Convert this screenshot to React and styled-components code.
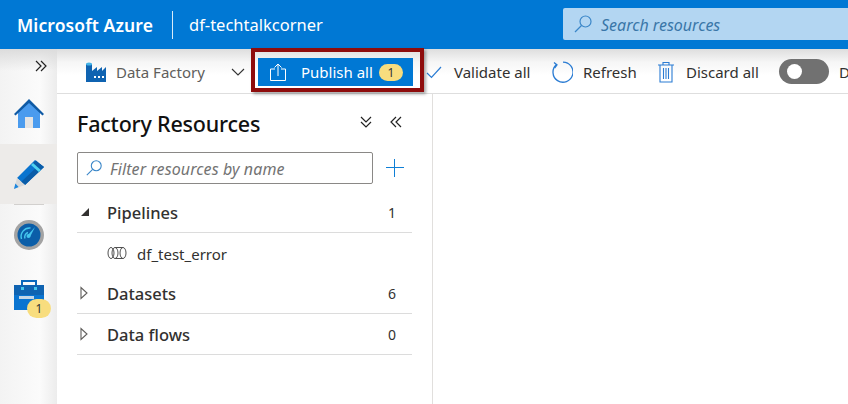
import React from 'react';
import styled, { createGlobalStyle } from 'styled-components';

const GlobalStyle = createGlobalStyle`
  html, body {
    margin: 0;
    padding: 0;
    background: white;
    overflow: hidden;
  }
  body {
    font-family: "Noto Sans", "Open Sans", "Liberation Sans", sans-serif;
  }
`;

const Page = styled.div`
  width: 848px;
  height: 404px;
  display: flex;
  flex-direction: column;
  overflow: hidden;
`;

const Header = styled.header`
  height: 49px;
  flex: none;
  background-color: #0078d4;
  display: flex;
  align-items: center;
  color: white;
  padding-left: 17px;
`;

const Brand = styled.span`
  font-size: 17.5px;
  font-weight: 600;
  letter-spacing: 0.1px;
  width: 155px;
  flex: none;
`;

const HeaderDivider = styled.span`
  width: 1px;
  height: 28px;
  background-color: #d8ebf9;
  flex: none;
`;

const FactoryName = styled.span`
  font-size: 16.5px;
  margin-left: 16px;
  width: 374px;
  flex: none;
`;

const SearchBox = styled.div`
  flex: 1;
  height: 32px;
  margin-top: -1px;
  background-color: #b3d6f2;
  border-radius: 2px 0 0 2px;
  display: flex;
  align-items: center;
  padding-left: 10px;
  gap: 8px;
  font-size: 16px;
  font-style: italic;
  color: #3a76a8;
`;

const Placeholder = styled.span`
  padding-top: 2px;
`;

const Body = styled.div`
  flex: 1;
  display: flex;
  min-height: 0;
`;

const Rail = styled.nav`
  width: 57px;
  flex: none;
  background:
    linear-gradient(to bottom, #dcdcdc, rgba(240, 240, 240, 0) 22px),
    linear-gradient(to right, #f3f3f3, #fbfbfb 70%, #ececec);
  display: flex;
  flex-direction: column;
  align-items: center;
  padding-top: 5px;
`;

const RailToggle = styled.div`
  align-self: flex-end;
  height: 24px;
  margin-bottom: 6px;
  padding-right: 9px;
  display: flex;
  align-items: center;
`;

const RailItem = styled.div`
  width: 57px;
  height: 60px;
  display: flex;
  align-items: center;
  justify-content: center;
  position: relative;
  background-color: ${props => props.active ? '#edebe9' : 'transparent'};
`;

const RailSeparator = styled.div`
  width: 30px;
  height: 1px;
  flex: none;
  background-color: #d2d0ce;
`;

const RailBadge = styled.span`
  position: absolute;
  left: 27px;
  top: 34px;
  width: 24px;
  height: 19px;
  border-radius: 10px;
  background-color: #f8dd7e;
  color: #333;
  font-size: 12px;
  display: flex;
  align-items: center;
  justify-content: center;
`;

const Main = styled.div`
  flex: 1;
  display: flex;
  flex-direction: column;
  min-width: 0;
`;

const Toolbar = styled.div`
  height: 44px;
  flex: none;
  background: linear-gradient(to bottom, #dedede, #f6f6f6 30%, #ffffff 60%);
  border-bottom: 1px solid #dedede;
  display: flex;
  align-items: center;
  padding-left: 29px;
  font-size: 15px;
  white-space: nowrap;
`;

const ToolbarAction = styled.div`
  display: flex;
  align-items: center;
  flex: none;
  width: ${props => props.width}px;
  gap: ${props => props.gap}px;
  margin-top: 2px;
  color: ${props => props.muted ? '#605e5c' : '#323130'};
`;

const FactoryLabel = styled.span`
  width: 106px;
`;

const Highlight = styled.div`
  flex: none;
  width: 173px;
  height: 44px;
  box-sizing: border-box;
  border: 4px solid #8e0c0c;
  box-shadow: 2px 2px 3px rgba(0, 0, 0, 0.35);
  padding: 6px 7px 0 3px;
  margin-right: 2px;
  align-self: flex-start;
  margin-top: -1px;
  position: relative;
`;

const PublishButton = styled.div`
  height: 28px;
  background-color: #0078d4;
  color: white;
  display: flex;
  align-items: center;
  padding-left: 11px;
`;

const PublishLabel = styled.span`
  margin-left: 14px;
`;

const CountBadge = styled.span`
  margin-left: 6px;
  width: 24px;
  height: 17px;
  border-radius: 9px;
  background-color: #f8dd7e;
  color: #333;
  font-size: 12px;
  display: flex;
  align-items: center;
  justify-content: center;
`;

const Switch = styled.div`
  width: 50px;
  height: 25px;
  border-radius: 13px;
  background-color: #717171;
  margin-right: 10px;
  flex: none;
  display: flex;
  align-items: center;
  padding-left: 8px;
  box-sizing: border-box;
`;

const SwitchKnob = styled.span`
  width: 15px;
  height: 15px;
  border-radius: 50%;
  background-color: white;
`;

const Content = styled.div`
  flex: 1;
  display: flex;
  min-height: 0;
`;

const ResourcePanel = styled.aside`
  width: 376px;
  flex: none;
  box-sizing: border-box;
  border-right: 1px solid #e1dfdd;
  padding: 0 20px;
`;

const PanelHeader = styled.div`
  height: 58px;
  display: flex;
  align-items: center;
  justify-content: space-between;
`;

const PanelTitle = styled.h2`
  margin: 0;
  font-size: 21.5px;
  font-weight: 500;
  letter-spacing: -0.2px;
  color: #111;
`;

const PanelTools = styled.div`
  display: flex;
  gap: 16px;
  margin: 0 9px 2px 0;
`;

const FilterRow = styled.div`
  display: flex;
  align-items: center;
  gap: 12px;
  margin-bottom: 8px;
`;

const FilterBox = styled.div`
  width: 296px;
  height: 32px;
  box-sizing: border-box;
  border: 1px solid #8a8886;
  border-radius: 2px;
  display: flex;
  align-items: center;
  padding-left: 7px;
  gap: 7px;
  font-size: 16px;
  font-style: italic;
  letter-spacing: 0.1px;
  color: #737373;
`;

const TreeRow = styled.div`
  height: ${props => props.leaf ? 40 : 41}px;
  box-sizing: border-box;
  display: flex;
  align-items: center;
  border-bottom: ${props => props.leaf ? 'none' : '1px solid #dcdcdc'};
  padding-left: ${props => props.leaf ? 30 : 3}px;
  padding-right: 16px;
  color: #323130;
  font-size: ${props => props.leaf ? 15 : 16.5}px;
  font-weight: ${props => props.leaf ? 400 : 500};
`;

const Caret = styled.span`
  width: 27px;
  flex: none;
  display: flex;
  align-items: center;
`;

const RowLabel = styled.span`
  flex: 1;
  margin-left: ${props => props.leaf ? 9 : 0}px;
  padding-top: ${props => props.leaf ? 2 : 0}px;
`;

const RowCount = styled.span`
  font-size: 14px;
  font-weight: 400;
`;

const Canvas = styled.div`
  flex: 1;
  background-color: white;
`;

function SearchIcon({ color, size = 20 }) {
  return (
    <svg width={size} height={size} viewBox="0 0 20 20" fill="none" stroke={color} strokeWidth="1.2">
      <circle cx="12.5" cy="7.5" r="5.5" />
      <path d="M8.5 11.5 2 18" />
    </svg>
  );
}

function DoubleChevron({ direction }) {
  const paths = {
    right: 'M2 2l5 5-5 5M7 2l5 5-5 5',
    left: 'M7 2l-5 5 5 5M12 2l-5 5 5 5',
    down: 'M2 2l5 5 5-5M2 7l5 5 5-5',
  };
  return (
    <svg width="14" height="14" viewBox="0 0 14 14" fill="none" stroke="#222" strokeWidth="1.2">
      <path d={paths[direction]} />
    </svg>
  );
}

function HomeIcon() {
  return (
    <svg width="30" height="30" viewBox="0 0 30 30">
      <path d="M4 13 15 3l11 10v16H4z" fill="#4a9bee" />
      <path d="M0 15 15 0l15 15-1.5 1.6L15 4 1.5 16.6z" fill="#0f5aa5" />
      <path d="M11 18h8v11h-8z" fill="#e4e4e4" />
    </svg>
  );
}

function PencilIcon() {
  return (
    <svg width="30" height="30" viewBox="0 0 30 30">
      <path d="M21 1 30 8 11 26 3 19z" fill="#0a74cf" />
      <path d="M22 1.5 29.5 8 25 12.5 17.5 5.5z" fill="#0a5ca8" />
      <path d="M7 23 26 5 30 8 11 26z" fill="#0a5ca8" />
      <path d="M17 6 24.8 13 26.8 11 19 4z" fill="#4fd2f0" />
      <path d="M3 19 11 26 0 30z" fill="#d8d8d8" />
      <path d="M1.4 24.6 4.6 28 0 30z" fill="#1b86de" />
    </svg>
  );
}

function MonitorIcon() {
  return (
    <svg width="30" height="30" viewBox="0 0 30 30">
      <circle cx="15" cy="15" r="15" fill="#a3a3a3" />
      <circle cx="15" cy="15" r="11.5" fill="#0b5ea8" />
      <path d="M7.5 19a8.5 8.5 0 0 1 9-11M11 18.5a4.6 4.6 0 0 1 3-6" fill="none" stroke="#45c6ee" strokeWidth="1.4" />
      <circle cx="14.5" cy="16" r="2" fill="#45c6ee" />
      <path d="M13.5 15.5 21 7l-5 10z" fill="#45c6ee" />
    </svg>
  );
}

function ToolboxIcon() {
  return (
    <svg width="30" height="30" viewBox="0 0 30 30">
      <path d="M7 5V0h16v5h-2V2H9v3z" fill="#0a68bd" />
      <path d="M0 5h30v25H0z" fill="#0a74d0" />
      <path d="M0 5h30v10H0z" fill="#0f63b1" />
      <path d="M7 7h3v3H7zM20 7h3v3h-3z" fill="#45c6ee" />
      <path d="M5 16h15v3H5z" fill="#c4d6e6" />
    </svg>
  );
}

function FactoryIcon() {
  return (
    <svg width="21" height="20" viewBox="0 0 21 20">
      <path d="M0 2h6v7l5-4v4l5-4v4l4-4v15H0z" fill="#0f63b1" />
      <ellipse cx="3" cy="2" rx="3" ry="1.6" fill="#45b4e8" />
      <path d="M8 14h2v2H8zM12 14h2v2h-2zM16 14h2v2h-2z" fill="#fff" />
    </svg>
  );
}

function PublishIcon() {
  return (
    <svg width="18" height="20" viewBox="0 0 18 20" fill="none" stroke="white" strokeWidth="1">
      <path d="M6 7H1.5v11.5h15V7H12M9 14V2M5.5 5.5 9 2l3.5 3.5" />
    </svg>
  );
}

function CheckIcon() {
  return (
    <svg width="16" height="14" viewBox="0 0 16 14" fill="none" stroke="#2b7cd3" strokeWidth="1.2">
      <path d="M1 8l4.5 4.5L15 2" />
    </svg>
  );
}

function RefreshIcon() {
  return (
    <svg width="22" height="22" viewBox="0 0 22 22" fill="none" stroke="#2b7cd3" strokeWidth="1.3">
      <path d="M5.5 3.6A10 10 0 1 0 12 1.2" />
      <path d="M3 1.5l3 2.4L3.6 7" />
    </svg>
  );
}

function TrashIcon() {
  return (
    <svg width="18" height="22" viewBox="0 0 18 22" fill="none" stroke="#2b7cd3" strokeWidth="1.1">
      <path d="M1 4h16M6 4V1.5h6V4M3 4v17h12V4M6.5 7v11M9 7v11M11.5 7v11" />
    </svg>
  );
}

function ChevronDown() {
  return (
    <svg width="14" height="8" viewBox="0 0 14 8" fill="none" stroke="#333" strokeWidth="1.1">
      <path d="M1 1l6 6 6-6" />
    </svg>
  );
}

function PlusIcon() {
  return (
    <svg width="20" height="20" viewBox="0 0 20 20" stroke="#0f7fd6" strokeWidth="1">
      <path d="M9.5 1v18M1 9.5h18" />
    </svg>
  );
}

function CaretIcon({ open }) {
  return open ? (
    <svg width="10" height="10" viewBox="0 0 10 10"><path d="M9 1v8H1z" fill="#323130" /></svg>
  ) : (
    <svg width="8" height="14" viewBox="0 0 8 14" fill="none" stroke="#605e5c" strokeWidth="1.1">
      <path d="M1 1.5v11L7 7z" />
    </svg>
  );
}

function PipelineIcon() {
  return (
    <svg width="21" height="14" viewBox="0 0 21 14" fill="none" stroke="#505050" strokeWidth="1">
      <ellipse cx="4" cy="7" rx="3" ry="5.5" />
      <ellipse cx="8" cy="7" rx="3" ry="5.5" />
      <path d="M8 1.5h8M8 12.5h8" />
      <ellipse cx="16" cy="7" rx="3" ry="5.5" />
    </svg>
  );
}

const groups = [
  { name: 'Pipelines', count: 1, open: true },
  { name: 'Datasets', count: 6 },
  { name: 'Data flows', count: 0 },
];

function App() {
  return (
    <Page>
      <GlobalStyle />
      <Header>
        <Brand>Microsoft Azure</Brand>
        <HeaderDivider />
        <FactoryName>df-techtalkcorner</FactoryName>
        <SearchBox>
          <SearchIcon color="#3a86c8" />
          <Placeholder>Search resources</Placeholder>
        </SearchBox>
      </Header>
      <Body>
        <Rail>
          <RailToggle><DoubleChevron direction="right" /></RailToggle>
          <RailItem><HomeIcon /></RailItem>
          <RailItem active><PencilIcon /></RailItem>
          <RailSeparator />
          <RailItem><MonitorIcon /></RailItem>
          <RailItem>
            <ToolboxIcon />
            <RailBadge>1</RailBadge>
          </RailItem>
        </Rail>
        <Main>
          <Toolbar>
            <ToolbarAction width={165} gap={9} muted>
              <FactoryIcon />
              <FactoryLabel>Data Factory</FactoryLabel>
              <ChevronDown />
            </ToolbarAction>
            <Highlight>
              <PublishButton>
                <PublishIcon />
                <PublishLabel>Publish all</PublishLabel>
                <CountBadge>1</CountBadge>
              </PublishButton>
            </Highlight>
            <ToolbarAction width={125} gap={12}>
              <CheckIcon />
              Validate all
            </ToolbarAction>
            <ToolbarAction width={106} gap={10}>
              <RefreshIcon />
              Refresh
            </ToolbarAction>
            <ToolbarAction width={122} gap={11}>
              <TrashIcon />
              Discard all
            </ToolbarAction>
            <Switch><SwitchKnob /></Switch>
            <ToolbarAction width={120}>Data flow debug</ToolbarAction>
          </Toolbar>
          <Content>
            <ResourcePanel>
              <PanelHeader>
                <PanelTitle>Factory Resources</PanelTitle>
                <PanelTools>
                  <DoubleChevron direction="down" />
                  <DoubleChevron direction="left" />
                </PanelTools>
              </PanelHeader>
              <FilterRow>
                <FilterBox>
                  <SearchIcon color="#3a86c8" size={18} />
                  <Placeholder>Filter resources by name</Placeholder>
                </FilterBox>
                <PlusIcon />
              </FilterRow>
              {groups.map(group => (
                <React.Fragment key={group.name}>
                  <TreeRow>
                    <Caret><CaretIcon open={group.open} /></Caret>
                    <RowLabel>{group.name}</RowLabel>
                    <RowCount>{group.count}</RowCount>
                  </TreeRow>
                  {group.open && (
                    <TreeRow leaf>
                      <PipelineIcon />
                      <RowLabel leaf>df_test_error</RowLabel>
                    </TreeRow>
                  )}
                </React.Fragment>
              ))}
            </ResourcePanel>
            <Canvas />
          </Content>
        </Main>
      </Body>
    </Page>
  );
}

export default App;
